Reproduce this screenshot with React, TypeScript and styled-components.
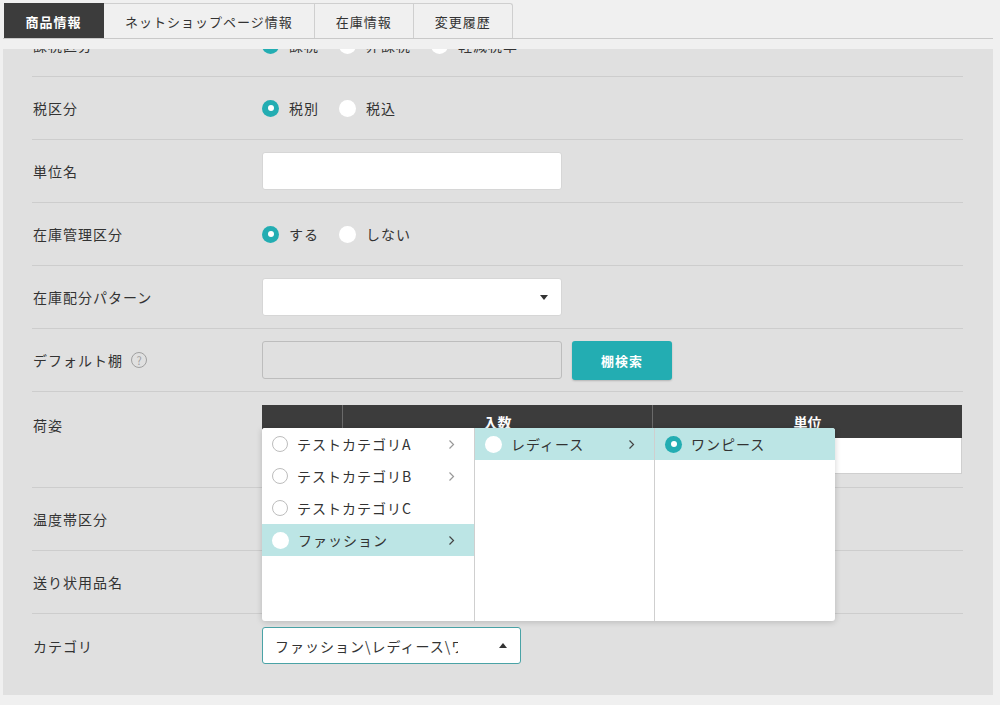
import React, { useLayoutEffect, useRef } from 'react';
import styled, { createGlobalStyle } from 'styled-components';

const GlobalStyle = createGlobalStyle`
  html, body {
    margin: 0;
    padding: 0;
    background: #f0f0f0;
    font-family: "Noto Sans CJK JP", "Noto Sans", sans-serif;
    color: #333;
  }
  * { box-sizing: border-box; }
`;

const TEAL = '#23adb2';

type Option = { label: string; checked?: boolean };

const taxKinds: Option[] = [{ label: '課税', checked: true }, { label: '非課税' }, { label: '軽減税率' }];
const taxTypes: Option[] = [{ label: '税別', checked: true }, { label: '税込' }];
const stockTypes: Option[] = [{ label: 'する', checked: true }, { label: 'しない' }];

type CategoryItem = { label: string; hasChild?: boolean; active?: boolean; checked?: boolean };

const categoryColumns: CategoryItem[][] = [
  [
    { label: 'テストカテゴリA', hasChild: true },
    { label: 'テストカテゴリB', hasChild: true },
    { label: 'テストカテゴリC' },
    { label: 'ファッション', hasChild: true, active: true },
  ],
  [{ label: 'レディース', hasChild: true, active: true }],
  [{ label: 'ワンピース', active: true, checked: true }],
];

const tabs = ['商品情報', 'ネットショップページ情報', '在庫情報', '変更履歴'];

const Chevron: React.FC<{ dark?: boolean }> = ({ dark }) => (
  <svg width="7" height="11" viewBox="0 0 7 11">
    <polyline
      points="1.5,1.5 5.5,5.5 1.5,9.5"
      fill="none"
      stroke={dark ? '#444' : '#999'}
      strokeWidth="1.2"
    />
  </svg>
);

const RadioGroup: React.FC<{ options: Option[] }> = ({ options }) => (
  <Radios>
    {options.map(o => (
      <RadioLabel key={o.label}>
        <RadioDot $checked={!!o.checked} />
        {o.label}
      </RadioLabel>
    ))}
  </Radios>
);

const App: React.FC = () => {
  const panelRef = useRef<HTMLDivElement>(null);

  // the form is shown scrolled a little past its first row
  useLayoutEffect(() => {
    if (panelRef.current) panelRef.current.scrollTop = 35;
  }, []);

  return (
    <Page>
      <GlobalStyle />
      <TabBar>
        {tabs.map((t, i) => (
          <Tab key={t} $active={i === 0}>
            {t}
          </Tab>
        ))}
      </TabBar>

      <Panel ref={panelRef}>
        <Form>
          <Row>
            <Label>課税区分</Label>
            <RadioGroup options={taxKinds} />
          </Row>
          <Row>
            <Label>税区分</Label>
            <RadioGroup options={taxTypes} />
          </Row>
          <Row>
            <Label>単位名</Label>
            <TextInput />
          </Row>
          <Row>
            <Label>在庫管理区分</Label>
            <RadioGroup options={stockTypes} />
          </Row>
          <Row>
            <Label>在庫配分パターン</Label>
            <SelectBox>
              <SelectText />
              <Caret />
            </SelectBox>
          </Row>
          <Row>
            <Label>
              デフォルト棚
              <HelpIcon>?</HelpIcon>
            </Label>
            <InlineControls>
              <TextInput $disabled />
              <PrimaryButton>棚検索</PrimaryButton>
            </InlineControls>
          </Row>
          <Row $top>
            <Label $top>荷姿</Label>
            <PackTable>
              <HeadCell />
              <HeadCell>入数</HeadCell>
              <HeadCell>単位</HeadCell>
              <BodyCell />
              <BodyCell />
              <BodyCell />
            </PackTable>
          </Row>
          <Row>
            <Label>温度帯区分</Label>
            <SelectBox>
              <SelectText>常温</SelectText>
              <Caret />
            </SelectBox>
          </Row>
          <Row>
            <Label>送り状用品名</Label>
            <TextInput />
          </Row>
          <Row $last>
            <Label>カテゴリ</Label>
            <CategoryField>
              <CategoryMenu>
                {categoryColumns.map((col, ci) => (
                  <MenuColumn key={ci}>
                    {col.map(item => (
                      <MenuItem key={item.label} $active={!!item.active}>
                        <MenuRadio $active={!!item.active} $checked={!!item.checked} />
                        <MenuText>{item.label}</MenuText>
                        {item.hasChild && <Chevron dark={item.active} />}
                      </MenuItem>
                    ))}
                  </MenuColumn>
                ))}
              </CategoryMenu>
              <SelectBox $focused $width={259}>
                <SelectText $clip>ファッション\レディース\ワンピース</SelectText>
                <Caret $up />
              </SelectBox>
            </CategoryField>
          </Row>
        </Form>
      </Panel>
    </Page>
  );
};

const Page = styled.div`
  width: 1000px;
  height: 705px;
  padding: 3px 7px 10px 3px;
  display: flex;
  flex-direction: column;
`;

const TabBar = styled.div`
  display: flex;
  height: 36px;
  padding-left: 1px;
  border-bottom: 1px solid #c9c9c9;
  flex-shrink: 0;
`;

const Tab = styled.div<{ $active: boolean }>`
  height: 35px;
  padding: 0 21px;
  display: flex;
  align-items: center;
  font-size: 13px;
  letter-spacing: 1px;
  font-weight: ${({ $active }) => ($active ? 700 : 400)};
  color: ${({ $active }) => ($active ? '#fff' : '#333')};
  background: ${({ $active }) => ($active ? '#3c3c3c' : '#f0f0f0')};
  border: 1px solid ${({ $active }) => ($active ? '#3c3c3c' : '#cfcfcf')};
  border-bottom: none;
  border-left: none;
  &:first-child {
    width: 100px;
    justify-content: center;
    padding: 0;
  }
  &:last-child {
    border-top-right-radius: 3px;
  }
`;

const Panel = styled.div`
  margin-top: 10px;
  flex: 1;
  background: #e0e0e0;
  overflow: hidden;
`;

const Form = styled.div`
  padding: 0 30px 40px 29px;
`;

const Row = styled.div<{ $top?: boolean; $last?: boolean }>`
  display: grid;
  grid-template-columns: 230px 1fr;
  align-items: ${({ $top }) => ($top ? 'start' : 'center')};
  min-height: 63px;
  padding: ${({ $top }) => ($top ? '13px 0 13px' : '0')};
  border-bottom: ${({ $last }) => ($last ? 'none' : '1px solid #cdcdcd')};
`;

const Label = styled.div<{ $top?: boolean }>`
  display: flex;
  align-items: center;
  gap: 8px;
  padding-left: 1px;
  padding-top: ${({ $top }) => ($top ? '10px' : '0')};
  font-size: 14px;
  letter-spacing: 1px;
  color: #333;
`;

const HelpIcon = styled.span`
  width: 16px;
  height: 16px;
  border-radius: 50%;
  border: 1.5px solid #a0a0a0;
  color: #a0a0a0;
  font-size: 11px;
  letter-spacing: 0;
  display: inline-flex;
  align-items: center;
  justify-content: center;
  line-height: 1;
`;

const Radios = styled.div`
  display: flex;
  align-items: center;
  gap: 20px;
`;

const RadioLabel = styled.label`
  display: flex;
  align-items: center;
  gap: 10px;
  font-size: 14px;
  letter-spacing: 1px;
  color: #333;
`;

const RadioDot = styled.span<{ $checked: boolean }>`
  width: 17px;
  height: 17px;
  border-radius: 50%;
  background: ${({ $checked }) => ($checked ? TEAL : '#fff')};
  display: inline-flex;
  align-items: center;
  justify-content: center;
  &::after {
    content: '';
    width: 6px;
    height: 6px;
    border-radius: 50%;
    background: #fff;
    display: ${({ $checked }) => ($checked ? 'block' : 'none')};
  }
`;

const TextInput = styled.div<{ $disabled?: boolean }>`
  width: 300px;
  height: 38px;
  border-radius: 3px;
  border: 1px solid ${({ $disabled }) => ($disabled ? '#bdbdbd' : '#d6d6d6')};
  background: ${({ $disabled }) => ($disabled ? '#e0e0e0' : '#fff')};
`;

const InlineControls = styled.div`
  display: flex;
  align-items: center;
  gap: 10px;
`;

const PrimaryButton = styled.button`
  width: 100px;
  height: 39px;
  border: none;
  border-radius: 3px;
  background: ${TEAL};
  color: #fff;
  font-family: inherit;
  font-size: 13px;
  font-weight: 700;
  letter-spacing: 1px;
  box-shadow: 0 1px 2px rgba(0, 0, 0, 0.2);
`;

const SelectBox = styled.div<{ $focused?: boolean; $width?: number }>`
  width: ${({ $width }) => $width ?? 300}px;
  height: ${({ $focused }) => ($focused ? 37 : 38)}px;
  border-radius: 3px;
  background: #fff;
  border: 1px solid ${({ $focused }) => ($focused ? '#4aa3a6' : '#d6d6d6')};
  display: flex;
  align-items: center;
  padding: 0 13px 0 12px;
  gap: 8px;
`;

const SelectText = styled.div<{ $clip?: boolean }>`
  flex: ${({ $clip }) => ($clip ? '0 0 183px' : '1')};
  overflow: hidden;
  white-space: nowrap;
  font-size: 14px;
  letter-spacing: 1px;
  color: #333;
`;

const Caret = styled.span<{ $up?: boolean }>`
  margin-left: auto;
  width: 0;
  height: 0;
  border-left: 4px solid transparent;
  border-right: 4px solid transparent;
  ${({ $up }) => ($up ? 'border-bottom: 5px solid #333;' : 'border-top: 5px solid #333;')}
`;

const PackTable = styled.div`
  display: grid;
  grid-template-columns: 80px 310px 310px;
  grid-template-rows: 33px 36px;
  width: 700px;
`;

const HeadCell = styled.div`
  background: #3c3c3c;
  color: #fff;
  font-size: 14px;
  font-weight: 700;
  display: flex;
  align-items: center;
  justify-content: center;
  border-left: 1px solid #6a6a6a;
  &:first-child {
    border-left: none;
  }
`;

const BodyCell = styled.div`
  background: #fff;
  border-bottom: 1px solid #cfcfcf;
  &:last-child {
    border-right: 1px solid #cfcfcf;
  }
`;

const CategoryField = styled.div`
  position: relative;
  width: 259px;
`;

const CategoryMenu = styled.div`
  position: absolute;
  left: 0;
  bottom: calc(100% + 6px);
  width: 573px;
  height: 193px;
  background: #fff;
  border-radius: 3px;
  box-shadow: 0 1px 6px rgba(0, 0, 0, 0.18);
  display: grid;
  grid-template-columns: 212px 180px 1fr;
  overflow: hidden;
  z-index: 10;
`;

const MenuColumn = styled.div`
  display: flex;
  flex-direction: column;
  & + & {
    border-left: 1px solid #cfcfcf;
  }
`;

const MenuItem = styled.div<{ $active: boolean }>`
  height: 32px;
  display: flex;
  align-items: center;
  gap: 9px;
  padding: 0 19px 0 10px;
  background: ${({ $active }) => ($active ? '#bce5e5' : '#fff')};
`;

const MenuRadio = styled.span<{ $active: boolean; $checked: boolean }>`
  width: ${({ $active }) => ($active ? 17 : 16)}px;
  height: ${({ $active }) => ($active ? 17 : 16)}px;
  border-radius: 50%;
  flex-shrink: 0;
  background: ${({ $checked }) => ($checked ? TEAL : '#fff')};
  border: ${({ $active }) => ($active ? 'none' : '1px solid #bdbdbd')};
  display: inline-flex;
  align-items: center;
  justify-content: center;
  &::after {
    content: '';
    width: 6px;
    height: 6px;
    border-radius: 50%;
    background: #fff;
    display: ${({ $checked }) => ($checked ? 'block' : 'none')};
  }
`;

const MenuText = styled.span`
  flex: 1;
  font-size: 14px;
  letter-spacing: 1px;
  color: #333;
  white-space: nowrap;
`;

export default App;
